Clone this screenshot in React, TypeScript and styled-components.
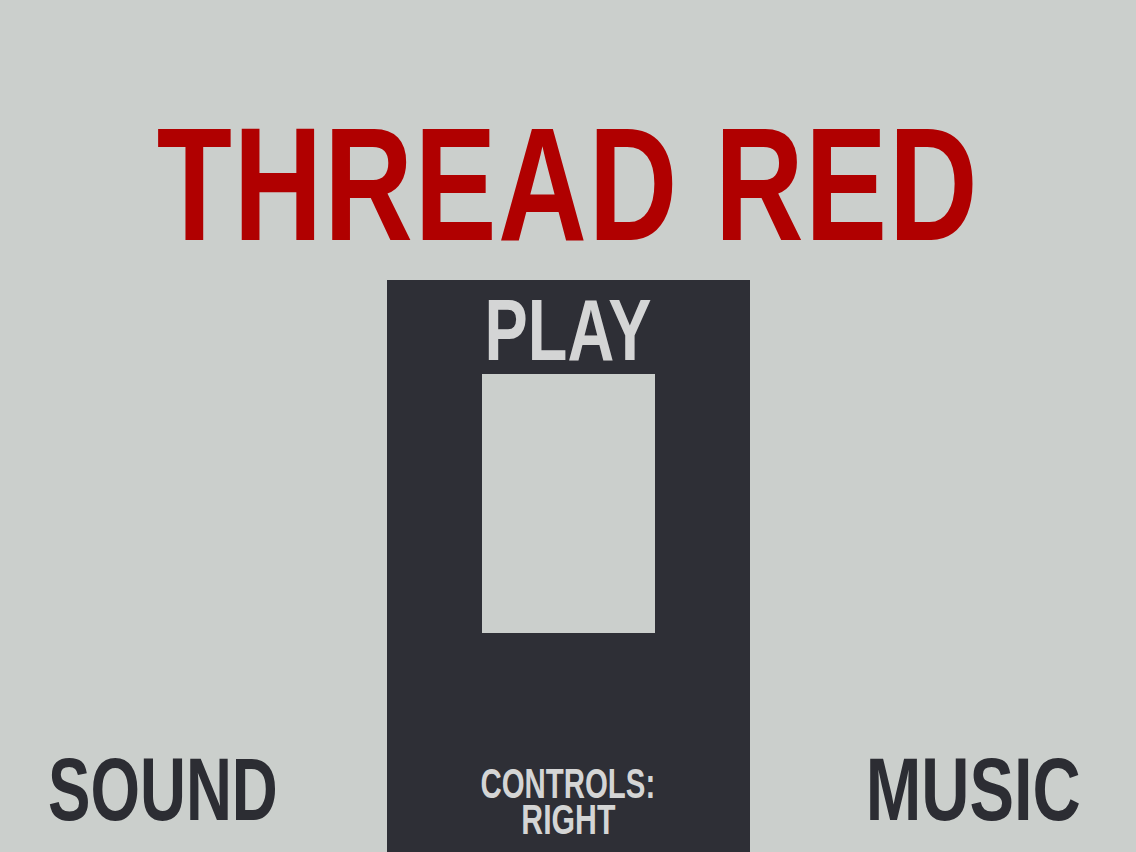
import React from "react";
import styled, { createGlobalStyle } from "styled-components";

const GlobalStyle = createGlobalStyle`
  html, body {
    margin: 0;
    padding: 0;
    background: #cbcfcc;
  }
  body {
    font-family: "Liberation Sans", Arial, sans-serif;
    font-weight: 700;
  }
`;

const Screen = styled.div`
  width: 1136px;
  height: 852px;
  overflow: hidden;
  display: flex;
  flex-direction: column;
  background: #cbcfcc;
`;

// no condensed face installed, so squeeze a bold sans horizontally
const Narrow = styled.span<{ $scale: number; $origin?: string }>`
  display: inline-block;
  white-space: nowrap;
  transform: scaleX(${(p) => p.$scale});
  transform-origin: ${(p) => p.$origin ?? "center"};
`;

const Header = styled.header`
  height: 280px;
  display: flex;
  justify-content: center;
  align-items: flex-start;
  padding-top: 103px;
  box-sizing: border-box;
`;

const Title = styled.h1`
  margin: 0;
  font-size: 162px;
  line-height: 1;
  color: #b00000;
  letter-spacing: 2px;
`;

const Stage = styled.main`
  flex: 1;
  display: grid;
  grid-template-columns: 1fr 363px 1fr;
`;

const Side = styled.div<{ $align: "left" | "right" }>`
  display: flex;
  align-items: flex-end;
  justify-content: ${(p) => (p.$align === "left" ? "flex-start" : "flex-end")};
  padding: ${(p) => (p.$align === "left" ? "0 0 18px 48px" : "0 55px 18px 0")};
`;

const SideLabel = styled.button`
  border: 0;
  background: none;
  padding: 0;
  font: inherit;
  font-size: 89px;
  line-height: 1;
  color: #2c2d33;
  cursor: pointer;
`;

const Panel = styled.section`
  background: #2e2f36;
  display: flex;
  flex-direction: column;
  align-items: center;
  padding-top: 6px;
`;

const PlayLabel = styled.div`
  font-size: 87px;
  line-height: 1;
  color: #d4d5d5;
`;

const Preview = styled.div`
  width: 173px;
  height: 259px;
  margin-top: 1px;
  background: #cbcfcc;
`;

const Controls = styled.div`
  margin-top: auto;
  padding-bottom: 14px;
  font-size: 42px;
  line-height: 36px;
  text-align: center;
  color: #d4d5d5;
  display: flex;
  flex-direction: column;
  align-items: center;
`;

export default function App() {
  return (
    <>
      <GlobalStyle />
      <Screen>
        <Header>
          <Title>
            <Narrow $scale={0.76}>THREAD RED</Narrow>
          </Title>
        </Header>
        <Stage>
          <Side $align="left">
            <SideLabel>
              <Narrow $scale={0.715} $origin="left">SOUND</Narrow>
            </SideLabel>
          </Side>
          <Panel>
            <PlayLabel>
              <Narrow $scale={0.745}>PLAY</Narrow>
            </PlayLabel>
            <Preview />
            <Controls>
              <Narrow $scale={0.7}>CONTROLS:</Narrow>
              <Narrow $scale={0.72}>RIGHT</Narrow>
            </Controls>
          </Panel>
          <Side $align="right">
            <SideLabel>
              <Narrow $scale={0.75} $origin="right">MUSIC</Narrow>
            </SideLabel>
          </Side>
        </Stage>
      </Screen>
    </>
  );
}
